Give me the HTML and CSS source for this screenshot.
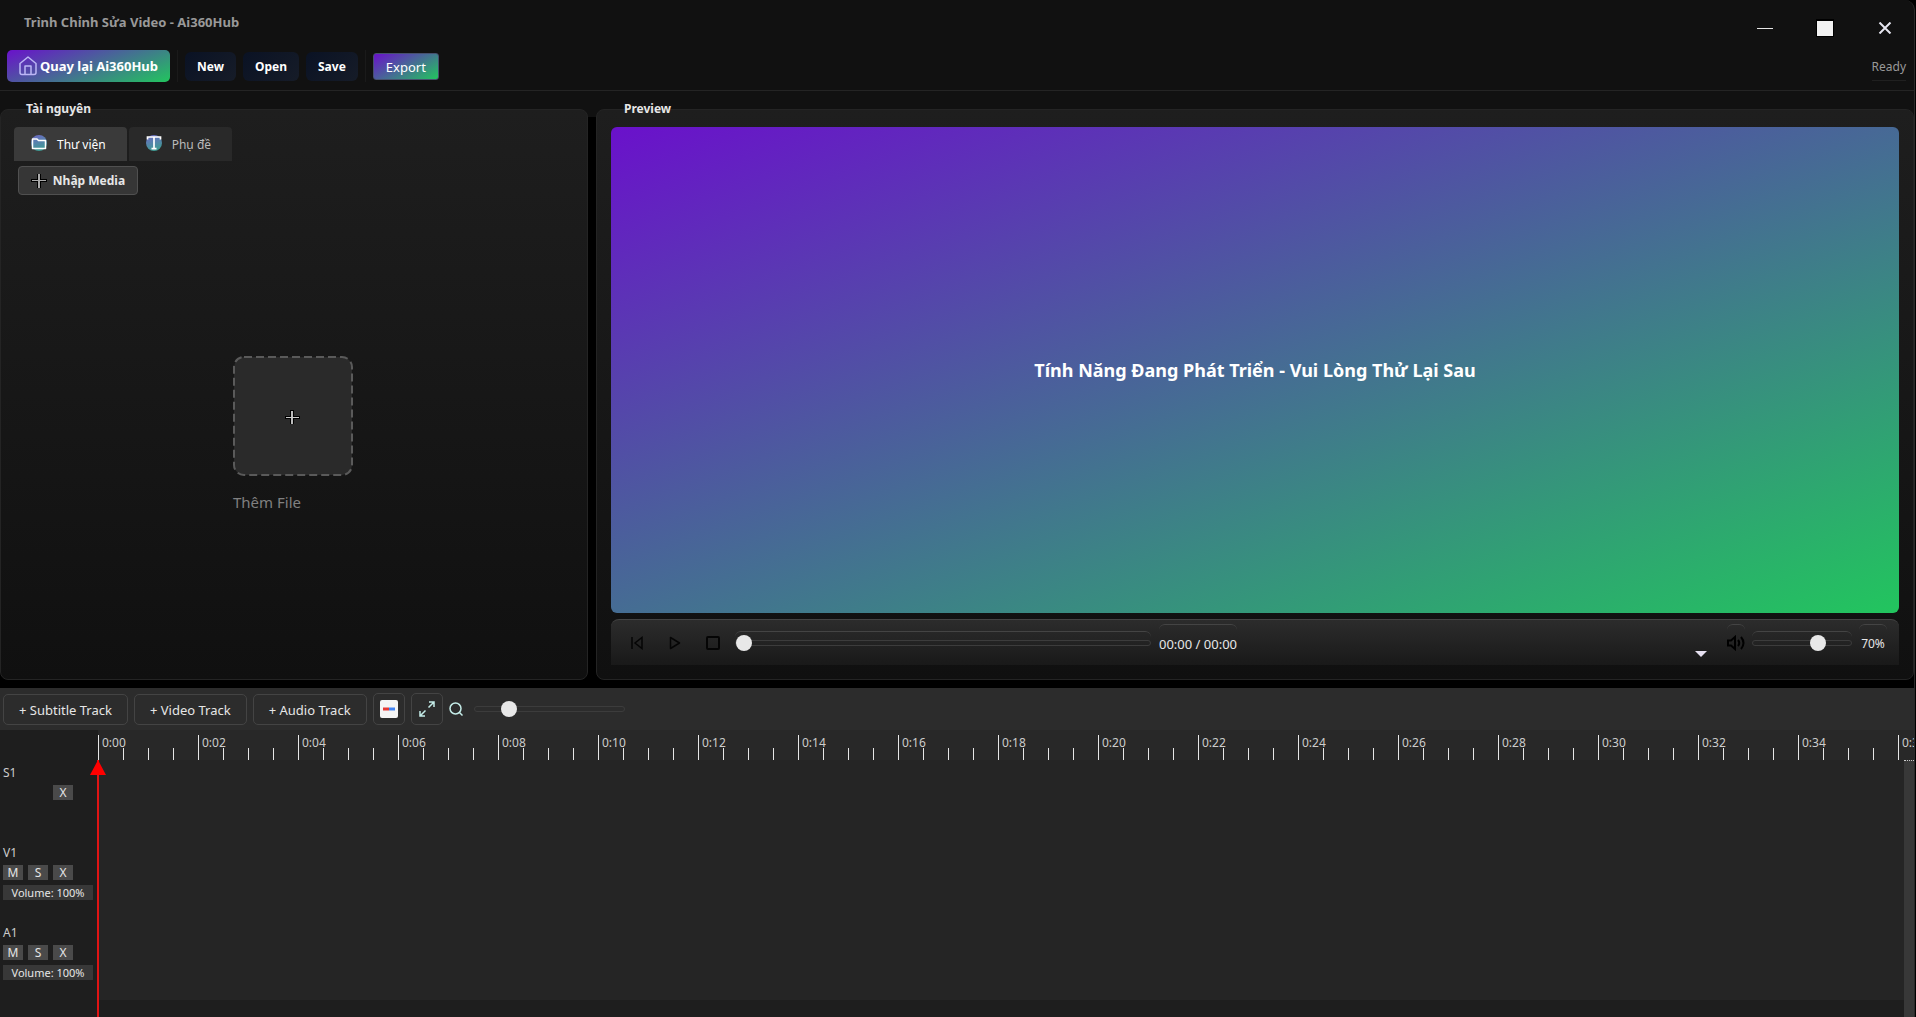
FILE: index.html
```html
<!DOCTYPE html>
<html lang="vi">
<head>
<meta charset="utf-8">
<meta name="viewport" content="width=device-width, initial-scale=1">
<title>Trình Chỉnh Sửa Video - Ai360Hub</title>
<link rel="stylesheet" href="styles.css">
</head>
<body>
<div class="window">
  <header class="header">
    <div class="titlebar">
      <h1 class="app-title">Trình Chỉnh Sửa Video - Ai360Hub</h1>
      <div class="window-controls">
        <button class="win-btn" aria-label="Thu nhỏ"><svg width="16" height="16" viewBox="0 0 16 16"><path d="M0 8.5H16" stroke="#e6e6e6"/></svg></button>
        <button class="win-btn" aria-label="Phóng to"><svg width="18" height="18" viewBox="0 0 18 18"><path d="M0 0H18V18H0Z" fill="#000"/><path d="M1 2H17V17H1Z" fill="#f2f2f2"/></svg></button>
        <button class="win-btn" aria-label="Đóng"><svg width="14" height="12" viewBox="0 0 14 12"><path d="M1.500 .5L12.500 11.500M12.500 .5L1.500 11.500" stroke="#e6e6f0" stroke-width="2"/></svg></button>
      </div>
    </div>
    <div class="toolbar">
      <button class="btn-home"><svg width="18" height="20" viewBox="0 0 18 20" fill="none" stroke="#bcb6f5" stroke-width="1.500" stroke-linejoin="round"><path d="M1 7.500L9 1L17 7.500V16.500Q17 18.500 15 18.500H3Q1 18.500 1 16.500Z"/><path d="M6 18.500V10H12V18.500"/></svg>Quay lại Ai360Hub</button>
      <span class="divider"></span>
      <div class="file-actions">
        <button class="btn-file">New</button>
        <button class="btn-file">Open</button>
        <button class="btn-file">Save</button>
      </div>
      <span class="divider"></span>
      <button class="btn-export">Export</button>
      <span class="status">Ready</span>
    </div>
  </header>

  <main class="workspace">
    <section class="panel library">
      <h2 class="panel-title">Tài nguyên</h2>
      <div class="tabs" role="tablist">
        <button class="tab tab-active" role="tab" aria-selected="true"><svg width="16" height="16" viewBox="0 0 16 16"><defs><linearGradient id="disc" x1="0" y1="0" x2="0.300" y2="1"><stop offset="0" stop-color="#7068c8"/><stop offset="1" stop-color="#3f9a94"/></linearGradient></defs><circle cx="8" cy="8" r="8" fill="url(#disc)"/><path d="M1.500 4H6L7.500 5.500H14.500V13.500H1.500Z" fill="none" stroke="#fff" stroke-width="1.500" stroke-linejoin="round"/></svg>Thư viện</button>
        <button class="tab" role="tab" aria-selected="false"><svg width="16" height="16" viewBox="0 0 16 16"><circle cx="8" cy="8" r="8" fill="url(#disc)"/><path d="M1.500 4.500V2H14.500V4.500M8 2V13.500M5.500 13.700H10.500" fill="none" stroke="#fff" stroke-width="1.700"/></svg>Phụ đề</button>
      </div>
      <button class="btn-import"><svg width="16" height="14" viewBox="0 0 16 14"><path d="M8 0V14" stroke="#000" stroke-width="4"/><path d="M0 6.500H16" stroke="#000" stroke-width="3"/><path d="M8 0V14" stroke="#aaa" stroke-width="2"/><path d="M1 6.500H15" stroke="#aaa"/></svg>Nhập Media</button>
      <div class="drop-wrap">
        <div class="drop">
          <button class="drop-zone" aria-label="Thêm File"><svg width="120" height="120" viewBox="0 0 120 120" fill="none"><rect x="1" y="1" width="118" height="118" rx="10" fill="#2a2a2a" stroke="#5a5a5a" stroke-width="2" stroke-dasharray="8 4"/><path d="M59 54V68" stroke="#000" stroke-width="4"/><path d="M52 61.500H67" stroke="#000" stroke-width="3"/><path d="M59 55V68" stroke="#bbb" stroke-width="2"/><path d="M53 61.500H66" stroke="#ccc"/></svg></button>
          <p class="drop-label">Thêm File</p>
        </div>
      </div>
    </section>

    <section class="panel preview">
      <h2 class="panel-title">Preview</h2>
      <div class="screen"><p class="screen-text">Tính Năng Đang Phát Triển - Vui Lòng Thử Lại Sau</p></div>
      <div class="player">
        <div class="transport">
          <button class="icon-btn" aria-label="Về đầu"><svg width="14" height="14" viewBox="0 0 14 14" fill="none" stroke="#050505" stroke-width="1.500"><path d="M2 1V13M12 1.500V12.500L5 7Z"/></svg></button>
          <button class="icon-btn" aria-label="Phát"><svg width="14" height="14" viewBox="0 0 14 14" fill="none" stroke="#050505" stroke-width="1.500"><path d="M2.500 1.500V12.500L11.500 7Z" stroke-linejoin="round"/></svg></button>
          <button class="icon-btn" aria-label="Dừng"><svg width="14" height="14" viewBox="0 0 14 14" fill="none" stroke="#050505" stroke-width="2"><rect x="1" y="1" width="12" height="12" rx="1"/></svg></button>
        </div>
        <input class="slider seek" type="range" min="0" max="100" value="0" aria-label="Vị trí phát">
        <span class="cap time">00:00 / 00:00</span>
        <button class="rate" aria-label="Tốc độ"><svg width="12" height="6" viewBox="0 0 12 6"><path d="M0 0H12L6 6Z" fill="#e6e0f0"/></svg></button>
        <span class="cap speaker"><svg width="18" height="16" viewBox="0 0 18 16" fill="none" stroke="#000" stroke-width="2"><path d="M1 5.500H4L8 2V14L4 10.500H1Z"/><path d="M11 5Q13.500 8 11 11M14 2Q19 8 14 14"/></svg></span>
        <input class="slider volume" type="range" min="0" max="100" value="70" aria-label="Âm lượng">
        <output class="cap percent">70%</output>
      </div>
    </section>
  </main>

  <section class="timeline">
    <div class="track-tools">
      <button class="btn-track">+ Subtitle Track</button>
      <button class="btn-track">+ Video Track</button>
      <button class="btn-track">+ Audio Track</button>
      <button class="btn-square" aria-label="Bắt dính"><svg width="18" height="18" viewBox="0 0 18 18"><rect width="18" height="18" rx="2" fill="#f5f5f5"/><path d="M3 9H9" stroke="#e53935" stroke-width="3"/><path d="M9 9H15" stroke="#4285f4" stroke-width="3"/></svg></button>
      <button class="btn-square" aria-label="Vừa khung"><svg width="16" height="16" viewBox="0 0 16 16" fill="none" stroke="#c4ece8" stroke-width="1.500"><path d="M9.500 6.500L15 1M10 1H15V6M6.500 9.500L1 15M1 10V15H6"/></svg></button>
      <svg class="zoom-icon" width="14" height="14" viewBox="0 0 14 14" fill="none" stroke="#c4ece8" stroke-width="1.500"><circle cx="6.500" cy="6.500" r="5.500"/><path d="M10.500 10.500L13.500 13.500"/></svg>
      <input class="slider zoom" type="range" min="0" max="100" value="20" aria-label="Thu phóng">
    </div>
    <div class="time-area">
      <div class="track-heads">
        <div class="track-head">
          <span class="track-name">S1</span>
          <div class="track-btns"><button class="mini mini-last">X</button></div>
        </div>
        <div class="track-head">
          <span class="track-name">V1</span>
          <div class="track-btns"><button class="mini">M</button><button class="mini">S</button><button class="mini">X</button></div>
          <button class="track-vol">Volume: 100%</button>
        </div>
        <div class="track-head">
          <span class="track-name">A1</span>
          <div class="track-btns"><button class="mini">M</button><button class="mini">S</button><button class="mini">X</button></div>
          <button class="track-vol">Volume: 100%</button>
        </div>
      </div>
      <div class="lanes">
        <ol class="ruler">
          <li>0:00</li><li>0:02</li><li>0:04</li><li>0:06</li><li>0:08</li><li>0:10</li><li>0:12</li><li>0:14</li><li>0:16</li><li>0:18</li><li>0:20</li><li>0:22</li><li>0:24</li><li>0:26</li><li>0:28</li><li>0:30</li><li>0:32</li><li>0:34</li><li>0:36</li>
        </ol>
        <div class="lane-body">
          <div class="lane-canvas"></div>
          <div class="scrollbar"></div>
        </div>
      </div>
      <div class="playhead"></div>
    </div>
  </section>
</div>
</body>
</html>
```
FILE: styles.css
```css
* { box-sizing: border-box; }

body {
  margin: 0;
  background: #000;
  color: #e6e6e6;
  font: 12px/16px "Noto Sans", "Open Sans", sans-serif;
}

button {
  margin: 0;
  padding: 0;
  border: 0;
  background: none;
  color: inherit;
  font: inherit;
}

h1, h2, p, ol { margin: 0; padding: 0; }
svg { display: block; flex: none; }

.window {
  display: flex;
  flex-direction: column;
  min-height: 100vh;
  margin-right: 1px;
  border-right: 1px solid #2a2a2a;
  border-radius: 0 10px 0 0;
  background: #111;
  overflow: hidden;
}

/* Header */
.header { border-bottom: 1px solid #242424; }

.titlebar {
  display: flex;
  justify-content: space-between;
  height: 48px;
  padding: 14px 20px 0 24px;
}
.app-title { color: #999; font-size: 13px; line-height: 16px; }
.window-controls { display: flex; gap: 42px; height: 28px; }
.win-btn { display: grid; place-items: center; width: 18px; height: 28px; }

.toolbar {
  display: flex;
  align-items: center;
  height: 42px;
  padding: 0 8px 6px 7px;
}
.btn-home {
  display: flex;
  align-items: center;
  justify-content: center;
  gap: 3px;
  width: 163px;
  height: 32px;
  border-radius: 5px;
  background: linear-gradient(160deg, #6a11cb 0%, #22c55e 100%);
  color: #fff;
  font-size: 13px;
  font-weight: 700;
}
.divider { width: 1px; height: 32px; margin: 0 7px; background: #1a1a1a; }
.file-actions { display: flex; gap: 7px; }
.btn-file {
  height: 29px;
  padding: 2px 12px 0;
  border-radius: 6px;
  background: linear-gradient(135deg, #0a1224, #161c28);
  color: #fff;
  font-weight: 700;
}
.btn-export {
  width: 66px;
  height: 27px;
  padding-top: 1px;
  border: 1px solid #46506e;
  border-radius: 3px;
  background: linear-gradient(150deg, #6a11cb, #22c55e);
  color: #fff;
  font-size: 13px;
}
.status {
  margin-left: auto;
  padding: 7px 0 5px;
  border-bottom: 1px solid #202020;
  color: #999;
  font-size: 12px;
}

/* Workspace */
.workspace {
  display: grid;
  grid-template-columns: 588fr 1318fr;
  flex: 1;
  gap: 8px;
  padding: 18px 0 8px;
  background: linear-gradient(#111 26px, #000 26px);
}
.panel {
  display: flex;
  flex-direction: column;
  min-width: 0;
  border: 1px solid #242424;
  border-radius: 8px;
  background: linear-gradient(#1e1e1e, #101010);
}
.panel-title {
  margin: -10px 0 9px 25px;
  font-size: 12px;
  line-height: 18px;
}
.tabs { display: flex; gap: 2px; padding-left: 13px; }
.tab {
  display: flex;
  align-items: center;
  gap: 10px;
  height: 34px;
  padding: 2px 21px 0 17px;
  border-radius: 4px 4px 0 0;
  background: #292929;
  color: #bbb;
}
.tab svg { margin-bottom: 4px; }
.tab-active { background: #3a3a3a; color: #fff; }
.btn-import {
  display: flex;
  align-items: center;
  align-self: flex-start;
  justify-content: center;
  gap: 6px;
  width: 120px;
  height: 29px;
  margin: 5px 0 0 17px;
  border: 1px solid #505050;
  border-radius: 4px;
  background: #363636;
  font-weight: 700;
}
.drop-wrap {
  display: grid;
  flex: 1;
  place-items: center;
  padding: 0 2px 4px 0;
}
.drop { display: grid; justify-items: start; gap: 14px; }
.drop-zone { border-radius: 10px; }
.drop-label { color: #808080; font-size: 15px; line-height: 24px; }

.preview { padding: 0 14px 14px; }
.preview .panel-title { margin-left: 13px; }
.screen {
  display: grid;
  flex: 1;
  place-items: center;
  border-radius: 6px;
  background: linear-gradient(160deg, #6a11cb 0%, #22c55e 100%);
  color: #fff;
}
.screen-text { font-size: 18px; font-weight: 700; line-height: 24px; }
.player {
  display: flex;
  align-items: center;
  height: 46px;
  margin-top: 6px;
  padding: 0 12px;
  border-top: 1px solid #444;
  border-radius: 8px 8px 0 0;
  background: linear-gradient(#2c2c2c, #191919);
}
.transport { display: flex; gap: 10px; }
.icon-btn { display: grid; place-items: center; width: 28px; height: 28px; }
.rate { margin: 22px 20px 0 auto; }

/* Captions inside the player carry a thin rounded top line */
.cap {
  display: grid;
  place-items: center;
  height: 37px;
  padding-top: 2px;
  border-top: 1px solid #444;
  border-radius: 6px;
}
.time { font-size: 13px; }
.speaker { width: 18px; margin-right: 7px; padding: 0; }
.percent { width: 28px; margin-left: 7px; }

.slider {
  height: 24px;
  margin: 0;
  border-radius: 6px;
  background: none;
  appearance: none;
}
.slider::-webkit-slider-runnable-track {
  height: 6px;
  border: 1px solid #3c3c3c;
  border-radius: 3px;
}
.slider::-webkit-slider-thumb {
  width: 16px;
  height: 16px;
  margin-top: -6px;
  border-radius: 50%;
  background: #e8e8e8;
  appearance: none;
}
.seek { width: 416px; margin: 0 8px; border-top: 1px solid #444; }
.volume { width: 100px; border-top: 1px solid #444; }
.zoom { width: 151px; }

/* Timeline */
.timeline { background: #1e1e1e; }
.track-tools {
  display: flex;
  align-items: center;
  gap: 6px;
  height: 42px;
  padding: 0 3px;
  background: #2c2c2c;
}
.btn-track {
  height: 31px;
  padding: 1px 15px 0;
  border: 1px solid #444;
  border-radius: 5px;
  font-size: 13px;
}
.btn-square {
  display: grid;
  place-items: center;
  width: 32px;
  height: 32px;
  border: 1px solid #444;
  border-radius: 5px;
}
.zoom-icon { margin-right: 5px; }

.time-area { position: relative; display: flex; }
.track-heads { width: 98px; padding: 30px 3px 17px; }
.track-head { height: 80px; padding-top: 5px; }
.track-name { display: block; height: 20px; color: #ccc; }
.track-btns { display: flex; gap: 5px; }
.mini {
  width: 20px;
  height: 15px;
  background: #4a4a4a;
  line-height: 16px;
}
.mini-last { margin-left: 50px; }
.track-vol {
  width: 90px;
  height: 15px;
  margin-top: 5px;
  background: #383838;
  font-size: 11px;
  line-height: 16px;
}

.lanes { display: flex; flex: 1; flex-direction: column; min-width: 0; }
.ruler {
  display: flex;
  height: 30px;
  padding-top: 5px;
  background: #282828;
  list-style: none;
  overflow: hidden;
}
.ruler li {
  flex: none;
  width: 100px;
  padding-left: 3px;
  border-left: 1px solid #e6e6e6;
  background:
    linear-gradient(#e6e6e6, #e6e6e6) 24px 100% / 1px 12px no-repeat,
    linear-gradient(#e6e6e6, #e6e6e6) 49px 100% / 1px 12px no-repeat,
    linear-gradient(#e6e6e6, #e6e6e6) 74px 100% / 1px 12px no-repeat;
  color: #ccc;
}
.lane-body { display: flex; flex: 1; }
.lane-canvas { flex: 1; margin-bottom: 17px; background: #252525; }
.scrollbar { width: 10px; border-top: 1px dotted #ccc; background: #383838; }

.playhead {
  position: absolute;
  top: 30px;
  bottom: 0;
  left: 90px;
  width: 16px;
  background:
    linear-gradient(#e01414, #e01414) 7px 0 / 2px 100% no-repeat;
}
.playhead::before {
  content: "";
  display: block;
  height: 15px;
  background: #f00;
  clip-path: polygon(50% 0, 100% 100%, 0 100%);
}
```
